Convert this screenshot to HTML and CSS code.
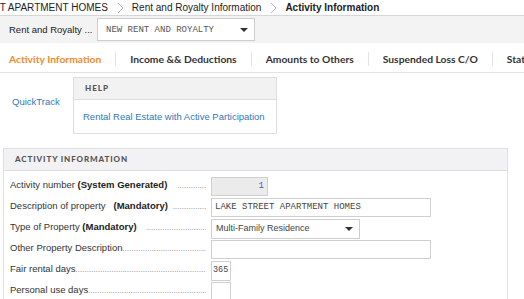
FILE: index.html
```html
<!DOCTYPE html>
<html lang="en">
<head>
    <meta charset="UTF-8">
    <meta name="viewport" content="width=device-width, initial-scale=1.0">
    <title>Activity Information</title>
    <link rel="stylesheet" href="styles.css">
</head>
<body>
    <div class="crumbs">
        <span class="crumb first">LAKE STREET APARTMENT HOMES</span>
        <svg class="chev" width="7" height="12" viewBox="0 0 7 12"><path d="M1 1l5 5-5 5" fill="none" stroke="#b8b8b8" stroke-width="1"/></svg>
        <span class="crumb">Rent and Royalty Information</span>
        <svg class="chev" width="7" height="12" viewBox="0 0 7 12"><path d="M1 1l5 5-5 5" fill="none" stroke="#b8b8b8" stroke-width="1"/></svg>
        <span class="crumb current">Activity Information</span>
    </div>

    <div class="toolbar">
        <span class="tb-label">Rent and Royalty ...</span>
        <div class="tb-select">
            <span>NEW RENT AND ROYALTY</span>
            <i class="arrow"></i>
        </div>
    </div>

    <div class="tabs">
        <span class="tab active">Activity Information</span>
        <span class="tab">Income &amp;&amp; Deductions</span>
        <span class="tab">Amounts to Others</span>
        <span class="tab">Suspended Loss C/O</span>
        <span class="tab">State Information</span>
    </div>

    <div class="top">
        <a class="quick">QuickTrack</a>
        <div class="help">
            <div class="help-head">HELP</div>
            <div class="help-body"><a>Rental Real Estate with Active Participation</a></div>
        </div>
    </div>

    <div class="section">
        <div class="sec-head">ACTIVITY INFORMATION</div>
        <div class="rows">
            <div class="row">
                <div class="label">Activity number&nbsp;<b class="note">(System Generated)</b><span class="dots gap"></span></div>
                <div class="field num grey">1</div>
            </div>
            <div class="row">
                <div class="label">Description of property&nbsp;&nbsp;&nbsp;<b class="note">(Mandatory)</b><span class="dots near"></span></div>
                <div class="field mono wide">LAKE STREET APARTMENT HOMES</div>
            </div>
            <div class="row">
                <div class="label">Type of Property&nbsp;<b class="note">(Mandatory)</b><span class="dots gap"></span></div>
                <div class="field sel">Multi-Family Residence<i class="arrow"></i></div>
            </div>
            <div class="row">
                <div class="label">Other Property Description<span class="dots"></span></div>
                <div class="field wide"></div>
            </div>
            <div class="row">
                <div class="label">Fair rental days<span class="dots"></span></div>
                <div class="field mono tiny">365</div>
            </div>
            <div class="row">
                <div class="label">Personal use days<span class="dots"></span></div>
                <div class="field tiny"></div>
            </div>
        </div>
    </div>
</body>
</html>
```

FILE: styles.css
```css
body{
    margin:0;
    padding:0;
    width:524px;
    height:299px;
    overflow:hidden;
    background:#fff;
    font-family:"Liberation Sans", Arial, sans-serif;
    color:#222;
}
.crumbs{
    height:15px;
    display:flex;
    align-items:center;
    white-space:nowrap;
    font-size:10px;
    border-bottom:1px solid #d6d6d6;
    overflow:hidden;
}
.crumbs .first{
    margin-left:-62px;
}
.crumbs .chev{
    margin:0 8px 0 9px;
}
.crumbs .current{
    font-weight:bold;
}
.toolbar{
    height:27px;
    display:flex;
    align-items:center;
    background:#f3f3f3;
    padding-left:9px;
    white-space:nowrap;
}
.tb-label{
    font-size:9.5px;
    width:88px;
}
.tb-select{
    display:flex;
    align-items:center;
    justify-content:space-between;
    padding:0 6px 0 8px;
    box-sizing:border-box;
    width:158px;
    height:23px;
    border:1px solid #cdcdcd;
    background:#fff;
    font-family:"Liberation Mono", monospace;
    font-size:9px;
    color:#555;
}
.arrow{
    width:0;
    height:0;
    border-left:4px solid transparent;
    border-right:4px solid transparent;
    border-top:4px solid #333;
}
.tabs{
    display:flex;
    align-items:center;
    white-space:nowrap;
    border-bottom:1px solid #e2e2e2;
    overflow:hidden;
    padding-top:3px;
    box-sizing:border-box;
    height:30px;
    font-family:Lato, sans-serif;
    font-weight:bold;
    font-size:10.3px;
    color:#333;
}
.tab{
    padding:0 14px;
    border-left:1px solid #e4e4e4;
    line-height:14px;
}
.tab:first-child{
    border-left:none;
    padding-left:9px;
}
.tab.active{
    color:#f58a2c;
}
.top{
    display:flex;
    align-items:center;
    padding:4px 0 0 12px;
    white-space:nowrap;
}
.quick{
    color:#2f79b9;
    font-size:9.5px;
    width:61px;
    margin-top:-8px;
}
.help{
    width:204px;
    border:1px solid #dedede;
    box-sizing:border-box;
}
.help-head{
    height:21px;
    line-height:20px;
    background:#f2f2f3;
    border-bottom:1px solid #dedede;
    padding-left:11px;
    font-family:Lato, sans-serif;
    font-weight:900;
    font-size:8px;
    letter-spacing:1px;
    color:#555;
}
.help-body{
    height:33px;
    line-height:33px;
    padding-left:9px;
    font-size:9.5px;
    color:#2f79b9;
}
.section{
    margin:14px 0 0 3px;
    width:505px;
    border:1px solid #e0e0e0;
    box-sizing:border-box;
}
.sec-head{
    height:21px;
    line-height:21px;
    background:#f2f2f4;
    border-bottom:1px solid #dedede;
    padding-left:11px;
    font-family:Lato, sans-serif;
    font-weight:900;
    font-size:8px;
    letter-spacing:0.9px;
    color:#555;
}
.rows{
    padding-top:5px;
}
.row{
    display:flex;
    align-items:center;
    height:21px;
}
.label{
    width:201px;
    padding-left:6px;
    margin-bottom:4px;
    display:flex;
    align-items:baseline;
    font-size:9.5px;
    color:#333;
    white-space:nowrap;
    overflow:hidden;
}
.note{
    font-weight:bold;
    font-size:9.5px;
    color:#222;
}
.dots{
    flex:1;
    overflow:hidden;
    margin-right:5px;
    font-size:7px;
    color:#666;
    letter-spacing:0.3px;
}
.dots::after{
    content:"................................................................................................";
}
.dots.gap{
    margin-left:10px;
}
.dots.near{
    margin-left:5px;
}
.field{
    height:19px;
    border:1px solid #cfcfcf;
    box-sizing:border-box;
    background:#fff;
    font-size:9px;
    line-height:17px;
    padding:0 3px;
    color:#444;
}
.mono{
    font-family:"Liberation Mono", monospace;
}
.grey{
    background:#ebebeb;
    width:57px;
}
.num{
    text-align:right;
    font-family:"Liberation Mono", monospace;
    color:#4b5bd0;
}
.wide{
    width:220px;
}
.sel{
    width:149px;
    height:20px;
    display:flex;
    align-items:center;
    justify-content:space-between;
    padding:0 6px 0 4px;
}
.tiny{
    width:20px;
    height:20px;
    padding:0 1px;
    font-size:8.5px;
}
```
